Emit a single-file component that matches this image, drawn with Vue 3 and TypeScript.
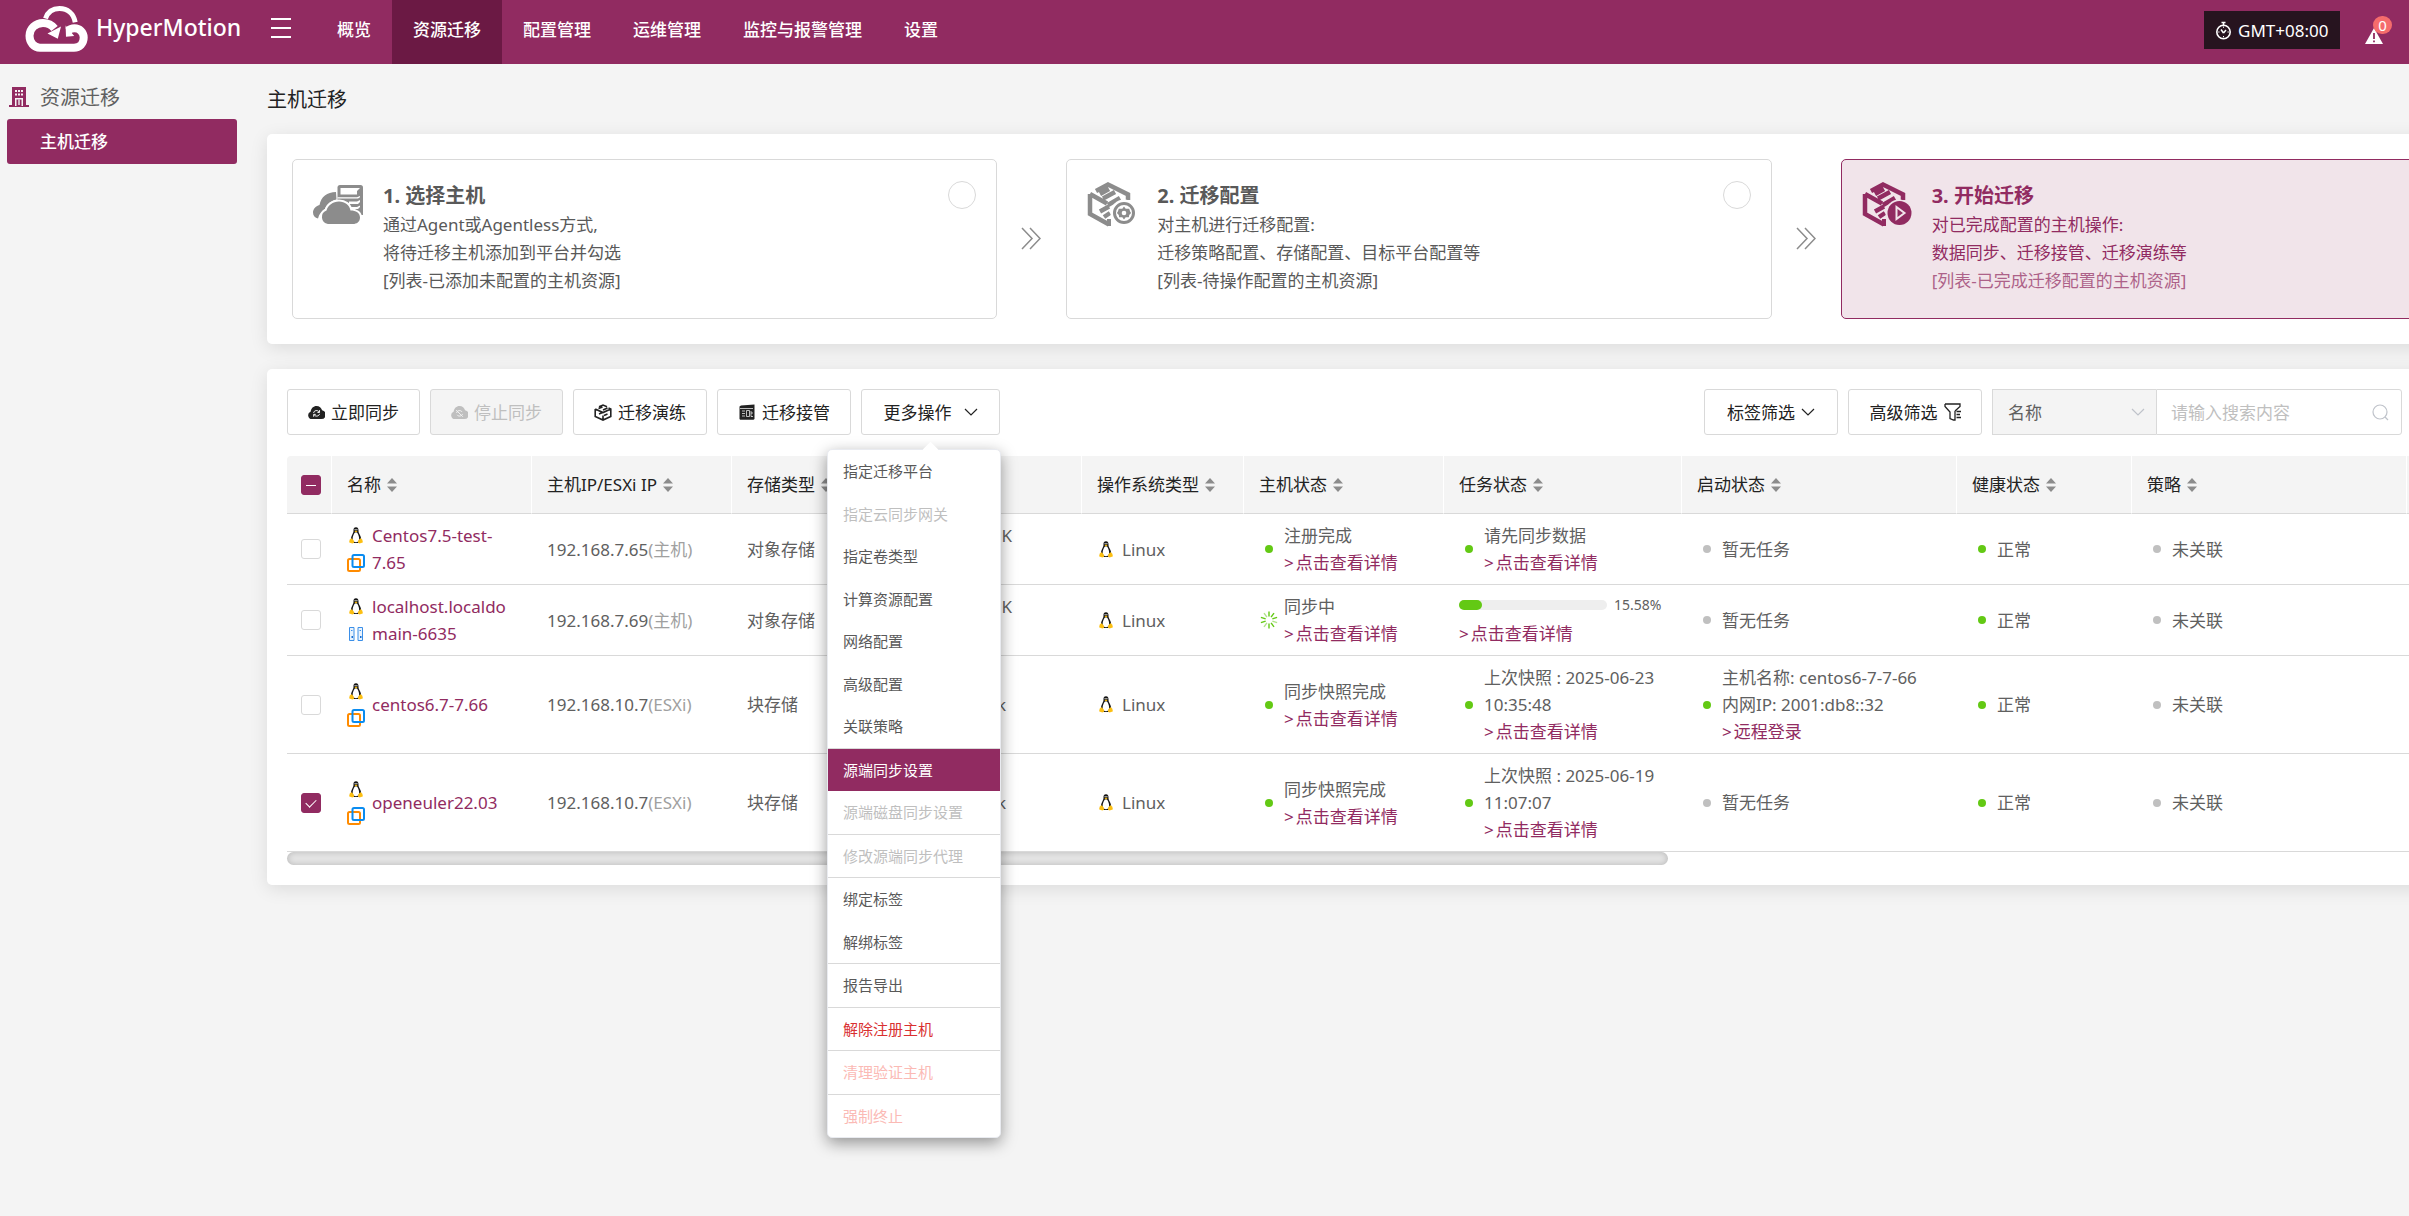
<script setup lang="ts">
import { ref } from 'vue'

type Tone = 'ok' | 'idle' | 'busy'

interface Status {
  tone: Tone
  lines: string[]
  link?: string
}

interface Host {
  id: number
  name: string[]
  source: 'vm' | 'server'
  ip: string
  kind: string
  storage: string
  platform: string
  wrapped: boolean
  host: Status
  task: Status
  progress?: number
  boot: Status
  checked: boolean
}

interface MenuItem {
  label: string
  divided?: boolean
  state?: 'active' | 'disabled' | 'danger' | 'danger-disabled'
}

const detail = '点击查看详情'
const navItems = ['概览', '资源迁移', '配置管理', '运维管理', '监控与报警管理', '设置']
const activeNav = ref('资源迁移')
const keyword = ref('')

const steps = [
  {
    title: '1. 选择主机',
    icon: 'cloud',
    lines: ['通过Agent或Agentless方式,', '将待迁移主机添加到平台并勾选', '[列表-已添加未配置的主机资源]'],
  },
  {
    title: '2. 迁移配置',
    icon: 'gear',
    lines: ['对主机进行迁移配置:', '迁移策略配置、存储配置、目标平台配置等', '[列表-待操作配置的主机资源]'],
  },
  {
    title: '3. 开始迁移',
    icon: 'play',
    lines: ['对已完成配置的主机操作:', '数据同步、迁移接管、迁移演练等', '[列表-已完成迁移配置的主机资源]'],
  },
]

const menu: MenuItem[] = [
  { label: '指定迁移平台' },
  { label: '指定云同步网关', state: 'disabled' },
  { label: '指定卷类型' },
  { label: '计算资源配置' },
  { label: '网络配置' },
  { label: '高级配置' },
  { label: '关联策略' },
  { label: '源端同步设置', divided: true, state: 'active' },
  { label: '源端磁盘同步设置', state: 'disabled' },
  { label: '修改源端同步代理', divided: true, state: 'disabled' },
  { label: '绑定标签', divided: true },
  { label: '解绑标签' },
  { label: '报告导出', divided: true },
  { label: '解除注册主机', divided: true, state: 'danger' },
  { label: '清理验证主机', divided: true, state: 'danger-disabled' },
  { label: '强制终止', divided: true, state: 'danger-disabled' },
]

const columns = ['名称', '主机IP/ESXi IP', '存储类型', '', '操作系统类型', '主机状态', '任务状态', '启动状态', '健康状态', '策略']

const idle: Status = { tone: 'idle', lines: ['暂无任务'] }

const hosts = ref<Host[]>([
  {
    id: 1,
    name: ['Centos7.5-test-', '7.65'],
    source: 'vm',
    ip: '192.168.7.65',
    kind: '(主机)',
    storage: '对象存储',
    platform: 'K',
    wrapped: true,
    host: { tone: 'ok', lines: ['注册完成'], link: detail },
    task: { tone: 'ok', lines: ['请先同步数据'], link: detail },
    boot: idle,
    checked: false,
  },
  {
    id: 2,
    name: ['localhost.localdo', 'main-6635'],
    source: 'server',
    ip: '192.168.7.69',
    kind: '(主机)',
    storage: '对象存储',
    platform: 'K',
    wrapped: true,
    host: { tone: 'busy', lines: ['同步中'], link: detail },
    task: { tone: 'ok', lines: [], link: detail },
    progress: 15.58,
    boot: idle,
    checked: false,
  },
  {
    id: 3,
    name: ['centos6.7-7.66'],
    source: 'vm',
    ip: '192.168.10.7',
    kind: '(ESXi)',
    storage: '块存储',
    platform: 'k',
    wrapped: false,
    host: { tone: 'ok', lines: ['同步快照完成'], link: detail },
    task: { tone: 'ok', lines: ['上次快照 : 2025-06-23', '10:35:48'], link: detail },
    boot: { tone: 'ok', lines: ['主机名称: centos6-7-7-66', '内网IP: 2001:db8::32'], link: '远程登录' },
    checked: false,
  },
  {
    id: 4,
    name: ['openeuler22.03'],
    source: 'vm',
    ip: '192.168.10.7',
    kind: '(ESXi)',
    storage: '块存储',
    platform: 'k',
    wrapped: false,
    host: { tone: 'ok', lines: ['同步快照完成'], link: detail },
    task: { tone: 'ok', lines: ['上次快照 : 2025-06-19', '11:07:07'], link: detail },
    boot: idle,
    checked: true,
  },
])
</script>

<template>
  <div class="page">
    <svg class="defs" aria-hidden="true">
      <symbol id="tux" viewBox="0 0 14 17">
        <path d="M7 .3C4.900.3 4.400 1.900 4.500 3.600c.1 1.900-.6 2.600-1.400 4.300C2.200 9.700 1.700 11.500 2 13.500l3 2.500h4l3.100-2.500c.3-2.200-.4-4.100-1.300-5.800C9.900 6 9.500 5.300 9.500 3.500 9.500 1.600 9 .3 7 .3z" fill="#151515" />
        <path d="M7 5.200c-1 0-1.700.8-2.200 2C4.100 8.800 3.500 10.400 3.700 12.200c.2 1.700 1.500 3 3.300 3s3-1.300 3.100-3c.1-1.800-.4-3.400-1-4.900C8.600 6 8 5.200 7 5.200z" fill="#fff" />
        <path d="M5.500 4.200 7 3.400l1.500.8L7 5.400z" fill="#f5b800" />
        <circle cx="6.100" cy="2.700" r=".6" fill="#fff" />
        <circle cx="7.900" cy="2.700" r=".6" fill="#fff" />
        <path d="M2.300 11.300c.9.2 2.700 2.300 2.800 3.300.1 1.300-1.200 2.100-2.500 1.700L.4 15.500c-.6-.4 0-1 .1-1.700 0-.9.100-1.400.7-1.600.5-.2.600-.9 1.100-.9zM11.700 11.300c-.9.2-2.700 2.300-2.800 3.300-.1 1.300 1.200 2.100 2.500 1.700l2.200-.8c.6-.4 0-1-.1-1.700 0-.9-.1-1.400-.7-1.600-.5-.2-.6-.9-1.100-.9z" fill="#fcbf12" />
      </symbol>
      <symbol id="hex" viewBox="0 0 50 46">
        <path d="M9 10 21 3.500l20 10v5.500M3 13v20l19 10.500M3 13l17 9.500M13 13l9-5M16 17.500 28 11M21 24l12-7M13 30.500l9-5M17 36l6-4" fill="none" stroke="currentColor" stroke-width="4.500" />
        <path d="M22 38v7" stroke="currentColor" stroke-width="4" />
      </symbol>
      <symbol id="chevron" viewBox="0 0 14 9">
        <path d="m1 1 6 6 6-6" fill="none" stroke="currentColor" stroke-width="1.200" />
      </symbol>
    </svg>

    <header class="topbar">
      <a class="brand" href="#">
        <svg class="brand-mark" viewBox="0 0 63 46" aria-hidden="true">
          <path d="M20.500 12.500C23 5.500 28 2.600 34.500 2.600c8 0 14 5 15.700 13.600" fill="none" stroke="#fff" stroke-width="5" />
          <path d="M29.500 22.500C26.500 18.500 22.500 17 18 17 10.500 17 4.500 22.500 4.500 29.800 4.500 36.500 9 41.700 15 41.700h34c5.500 0 9.700-4.200 9.700-10.200 0-5.500-4.300-9.300-9.200-9.300-2.700 0-4.700.9-6.400 2.600" fill="none" stroke="#fff" stroke-width="8" />
          <path d="m22.500 27.500 13.500-7-3.200 12.300zM41 30.700l-.4-11.200 8.600 10.400z" fill="#fff" />
        </svg>
        <span>HyperMotion</span>
      </a>
      <button class="burger" type="button" aria-label="菜单"><i></i><i></i><i></i></button>
      <nav class="nav">
        <a v-for="item in navItems" :key="item" href="#" :class="{ current: item === activeNav }" @click.prevent="activeNav = item">{{ item }}</a>
      </nav>
      <button class="zone" type="button">
        <svg width="17" height="19" viewBox="0 0 17 19" fill="none" stroke="#fff" aria-hidden="true">
          <circle cx="8.500" cy="11" r="6.700" stroke-width="1.600" />
          <path d="M6.500 1.500h4M8.500 1.500v3M8.500 12 6 8.500M8.500 12l2.500-3" stroke-width="1.500" />
          <path d="M8.500 5.500v1.300M8.500 15v1.300M3.200 11h1.300M12.500 11h1.300" />
        </svg>
        <span>GMT+08:00</span>
      </button>
      <button class="alarm" type="button" aria-label="告警">
        <svg width="18" height="16" viewBox="0 0 18 16" aria-hidden="true">
          <path d="M9 0 18 16H0z" fill="#fff" />
          <path d="M9 5v6M9 12.500v1.700" stroke="#912b61" stroke-width="1.800" />
        </svg>
        <span class="badge">0</span>
      </button>
    </header>

    <div class="body">
      <aside class="side">
        <div class="side-title">
          <svg width="20" height="20" viewBox="0 0 20 20" aria-hidden="true">
            <path d="M3 0h14v18h3v2H0v-2h3z" fill="#912b61" />
            <path d="M6 3h2v2H6zM9 3h2v2H9zM12 3h2v2h-2zM6 6.500h2v2H6zM9 6.500h2v2H9zM12 6.500h2v2h-2zM6 11h8v8h-1.500v-6.500h-5V19H6z" fill="#f4f4f4" />
            <path d="M9.300 12.500h1.400V18H9.300z" fill="#f4f4f4" />
          </svg>
          <span>资源迁移</span>
        </div>
        <a class="side-link" href="#">主机迁移</a>
      </aside>

      <main class="content">
        <h1>主机迁移</h1>

        <section class="card steps">
          <template v-for="(step, i) in steps" :key="step.title">
            <svg v-if="i" class="next" viewBox="0 0 20 23" aria-hidden="true">
              <path d="m1 1 10 10.500L1 22M9 1l10 10.500L9 22" fill="none" stroke="#8c8c8c" stroke-width="1.500" />
            </svg>
            <article class="step" :class="{ chosen: i === 2 }">
              <svg v-if="step.icon === 'cloud'" class="step-icon" viewBox="0 -4 50 46" aria-hidden="true">
                <path d="M27 0h20.500A2.500 2.500 0 0 1 50 2.500V30H24.500V2.500A2.500 2.500 0 0 1 27 0z" fill="currentColor" />
                <path d="M27.500 3H47l-3 3v3.500H27.500zM24.500 12.300H44l3-1.300v1.300l-2 1.200H24.500zM36 16.500h8l3-1.500v2l-2 2h-9zM37 22h7l3-1.500V22l-2 2h-8z" fill="#fff" />
                <path d="M23 7C14 7 8 12 6.500 20 2.500 21 0 24.500 0 27.500c0 3 2 5.500 5 6 1-4.500 4-8 7-9.500 2-5 6-8.500 11.500-9.500z" fill="currentColor" />
                <path d="M15 39a7 7 0 0 1-1.500-13.500C14.500 20.500 20 16.500 26 16.500s10.500 3.500 11.500 9C43 25.500 47 28 47 32.500S43.500 39 40 39z" fill="currentColor" stroke="#fff" stroke-width="4" paint-order="stroke" />
              </svg>
              <svg v-else class="step-icon" viewBox="0 0 50 46" aria-hidden="true">
                <use href="#hex" />
                <circle cx="37" cy="32" r="13.500" class="halo" />
                <template v-if="step.icon === 'gear'">
                  <circle cx="37" cy="32" r="9.500" fill="none" stroke="currentColor" stroke-width="3" />
                  <path d="m37 25.500 1.700 2.200h3.500l.9 2.800 1 1.500-1.900 2-.3 2.300h-3.200L37 38.500l-1.700-2.200h-3.200l-.3-2.300-1.900-2 1-1.500.9-2.800h3.500z" fill="currentColor" />
                  <circle cx="37" cy="32" r="2.300" fill="#fff" />
                </template>
                <template v-else>
                  <circle cx="37.500" cy="32" r="12" fill="currentColor" />
                  <path d="M34.500 26v12l8-6z" fill="none" stroke="#f1e4ea" stroke-width="2" />
                </template>
              </svg>
              <div class="step-text">
                <h2>{{ step.title }}</h2>
                <p v-for="line in step.lines" :key="line">{{ line }}</p>
              </div>
              <span v-if="i < 2" class="ring"></span>
            </article>
          </template>
        </section>

        <section class="card list">
          <div class="toolbar">
            <button type="button" class="btn">
              <svg width="17" height="15" viewBox="0 0 18 15" aria-hidden="true">
                <path d="M4 14.500a4 4 0 0 1-1.300-7.700C3.200 2.900 5.800.5 9 .5c3 0 5.300 1.900 5.900 4.700a4.700 4.700 0 0 1-.9 9.300z" fill="currentColor" />
                <path d="M6 8c.2-3 4.500-3.400 5.700-1M12.200 5v2.500H10M12.200 9c-.5 2.700-4.500 3-5.700 1M6 12V9.500h2.200" fill="none" stroke="#fff" />
              </svg>立即同步
            </button>
            <button type="button" class="btn off" disabled>
              <svg width="17" height="15" viewBox="0 0 18 15" aria-hidden="true">
                <path d="M4 14.500a4 4 0 0 1-1.300-7.700C3.200 2.900 5.800.5 9 .5c3 0 5.300 1.900 5.900 4.700a4.700 4.700 0 0 1-.9 9.300z" fill="currentColor" />
                <path d="M6 8c.2-3 4.500-3.400 5.700-1M12.200 9c-.5 2.700-4.500 3-5.700 1M5.500 5l7 7" fill="none" stroke="#f4f4f4" />
              </svg>停止同步
            </button>
            <button type="button" class="btn">
              <svg width="18" height="17" viewBox="0 0 18 17" fill="none" stroke="currentColor" stroke-width="1.600" aria-hidden="true">
                <path d="M5 2.700 9 1l4 1.700M1.200 5v7.500L9 16l7.800-3.500V5l-2.300-1M1.200 5 9 8.500 16.800 5M9 11.500V16M4.500 4.500l4-1.500M9 6l4.500-2M5 10l3.500-1.500M10 11.500l3.500-1.500" />
              </svg>迁移演练
            </button>
            <button type="button" class="btn">
              <svg width="18" height="16" viewBox="0 0 16 16" aria-hidden="true">
                <path d="M2 1.500 15.500.5V15l-1 .8H1.200L.5 15V2.500z" fill="currentColor" />
                <path d="M1 4.500h13M3 7h3M3 9.500h3M3 12h3M7.500 6.500v6h3v-6zM12 7v5.500h2M12 9h2" fill="none" stroke="#fff" stroke-width=".7" />
              </svg>迁移接管
            </button>
            <div class="more">
              <button type="button" class="btn wide" aria-haspopup="menu" aria-expanded="true">更多操作<svg width="14" height="9"><use href="#chevron" /></svg></button>
              <ul class="menu" role="menu">
                <li v-for="item in menu" :key="item.label" :class="{ divided: item.divided }" role="none">
                  <button type="button" role="menuitem" :class="item.state" :disabled="item.state === 'disabled' || item.state === 'danger-disabled'">{{ item.label }}</button>
                </li>
              </ul>
            </div>

            <div class="filters">
              <button type="button" class="btn filter">标签筛选<svg width="14" height="9"><use href="#chevron" /></svg></button>
              <button type="button" class="btn filter">高级筛选<svg width="17" height="18" viewBox="0 0 17 18" fill="none" stroke="currentColor" stroke-width="1.300" aria-hidden="true">
                <path d="M1 1h15v2.500L11 8M1 1v2.500L6 9v6.500L9.500 17H11V8M12.500 8.500H17M12.500 11.500H16M12.500 14.500H17" />
              </svg></button>
              <div class="search">
                <div class="picker">
                  <select aria-label="搜索字段"><option>名称</option></select>
                  <svg width="14" height="9"><use href="#chevron" /></svg>
                </div>
                <div class="field">
                  <input v-model="keyword" type="text" aria-label="搜索内容" placeholder="请输入搜索内容" />
                  <svg width="17" height="17" viewBox="0 0 17 17" fill="none" stroke="#bfc3ca" stroke-width="1.200" aria-hidden="true">
                    <circle cx="8" cy="8" r="7" />
                    <path d="m13 13 3 3" />
                  </svg>
                </div>
              </div>
            </div>
          </div>

          <table>
            <colgroup>
              <col class="w-check" /><col class="w-200" /><col class="w-200" /><col class="w-150" /><col class="w-200" /><col class="w-os" />
              <col class="w-200" /><col class="w-task" /><col class="w-275" /><col class="w-health" /><col class="w-275" /><col />
            </colgroup>
            <thead>
              <tr>
                <th class="pick"><input class="box partial" type="checkbox" aria-label="全选" /></th>
                <th v-for="(col, i) in columns" :key="i">
                  {{ col }}<svg v-if="col" class="sort" viewBox="0 0 10 14" aria-hidden="true"><path d="M5 0l5 5.500H0zM5 14l5-5.500H0z" fill="#8c8c8c" /></svg>
                </th>
                <th></th>
              </tr>
            </thead>
            <tbody>
              <tr v-for="row in hosts" :key="row.id">
                <td class="pick"><input v-model="row.checked" class="box" type="checkbox" :aria-label="row.name.join('')" /></td>
                <td>
                  <div class="name">
                    <span class="marks">
                      <svg width="14" height="17"><use href="#tux" /></svg>
                      <svg v-if="row.source === 'vm'" width="18" height="18" viewBox="0 0 18 18" fill="none" stroke-width="2" aria-hidden="true">
                        <rect x="1" y="5" width="12" height="12" rx="1.500" stroke="#ff8b00" />
                        <rect x="5.500" y="1" width="11.500" height="12" rx="1.500" stroke="#0a8cf0" />
                      </svg>
                      <svg v-else width="14" height="14" viewBox="0 0 14 14" aria-hidden="true">
                        <path d="M.5.5h4.500v13H.5zM9 .5h4.500v13H9z" fill="#e9f3fd" stroke="#3b8fe8" />
                        <path d="M2 3.500h1.500M10.500 3.500H12" stroke="#3b8fe8" />
                        <path d="M2.500 10h1.500M11 10h1.500" stroke="#1b6fd0" stroke-width="2" />
                      </svg>
                    </span>
                    <a href="#"><template v-for="(part, i) in row.name" :key="part"><br v-if="i" />{{ part }}</template></a>
                  </div>
                </td>
                <td>{{ row.ip }}<span class="dim">{{ row.kind }}</span></td>
                <td>{{ row.storage }}</td>
                <td class="platform" :class="{ wrapped: row.wrapped }">{{ row.platform }}</td>
                <td><div class="os"><svg width="14" height="17"><use href="#tux" /></svg>Linux</div></td>
                <td v-for="(state, i) in [row.host, row.task, row.boot]" :key="i">
                  <div v-if="i === 1 && row.progress" class="progress">
                    <div class="meter">
                      <div class="track"><div class="fill" :style="{ width: row.progress + '%' }"></div></div>
                      <span>{{ row.progress }}%</span>
                    </div>
                    <a class="go" href="#"><span>&gt;</span>{{ state.link }}</a>
                  </div>
                  <div v-else class="status">
                    <span class="lamp">
                      <svg v-if="state.tone === 'busy'" width="18" height="18" viewBox="-9 -9 18 18" stroke="#63c914" stroke-width="1.400" aria-hidden="true">
                        <path v-for="n in 10" :key="n" d="M0-3.500v-5" :opacity="n % 3 ? 1 : 0.5" :transform="`rotate(${n * 36})`" />
                      </svg>
                      <i v-else :class="state.tone"></i>
                    </span>
                    <div>
                      <div v-for="line in state.lines" :key="line">{{ line }}</div>
                      <a v-if="state.link" class="go" href="#"><span>&gt;</span>{{ state.link }}</a>
                    </div>
                  </div>
                </td>
                <td><div class="status"><span class="lamp"><i class="ok"></i></span>正常</div></td>
                <td><div class="status"><span class="lamp"><i class="idle"></i></span>未关联</div></td>
                <td></td>
              </tr>
            </tbody>
          </table>
          <div class="scroll"></div>
        </section>
      </main>
    </div>
  </div>
</template>

<style>
body {
  margin: 0;
  background: #f4f4f4;
}
</style>

<style scoped>
.page {
  min-height: 100vh;
  overflow: hidden;
  background: #f4f4f4;
  color: #606060;
  font: 17px/27px "Noto Sans", "Noto Sans CJK SC", sans-serif;
}
.page * {
  box-sizing: border-box;
}
.defs {
  position: absolute;
  width: 0;
  height: 0;
}
a {
  color: #912b61;
  text-decoration: none;
}
button,
input,
select {
  font: inherit;
}
button {
  cursor: pointer;
}

.topbar {
  display: flex;
  align-items: center;
  height: 64px;
  padding: 0 17px 0 25px;
  background: #912b61;
}
.brand {
  display: flex;
  align-items: center;
  gap: 8px;
  width: 246px;
  height: 58px;
  align-self: flex-start;
  color: #fff;
  font-size: 23px;
  font-weight: 500;
}
.brand span {
  margin-bottom: 4px;
}
.brand-mark {
  width: 63px;
  height: 46px;
}
.burger {
  display: flex;
  flex-direction: column;
  gap: 7px;
  width: 20px;
  margin: 0 25px 8px 0;
  padding: 0;
  border: 0;
  background: none;
}
.burger i {
  height: 2px;
  background: #fff;
}
.nav {
  display: flex;
  flex: 1;
  height: 64px;
}
.nav a {
  padding: 0 21px 4px;
  color: #fff;
  font-weight: 500;
  line-height: 60px;
}
.nav .current {
  background: #6b1944;
}
.zone {
  display: flex;
  align-items: center;
  gap: 6px;
  width: 136px;
  height: 38px;
  margin: 0 25px 4px 0;
  padding: 0 11px;
  border: 0;
  background: #27141f;
  color: #fff;
}
.alarm {
  position: relative;
  display: flex;
  align-items: flex-end;
  width: 27px;
  height: 28px;
  margin-bottom: 4px;
  padding: 0;
  border: 0;
  background: none;
}
.badge {
  position: absolute;
  top: 0;
  right: 0;
  width: 19px;
  height: 18px;
  border-radius: 9px;
  background: #f56c6c;
  color: #fff;
  font-size: 15px;
  line-height: 18px;
}

.body {
  display: flex;
}
.side {
  flex: 0 0 267px;
  padding: 15px 30px 0 7px;
}
.side-title {
  display: flex;
  align-items: center;
  gap: 11px;
  height: 36px;
  margin-bottom: 4px;
  padding-left: 2px;
  font-size: 20px;
}
.side-link {
  display: block;
  padding-left: 33px;
  border-radius: 3px;
  background: #912b61;
  color: #fff;
  font-weight: 500;
  line-height: 45px;
}
.content {
  flex: 1;
  min-width: 0;
}
h1 {
  margin: 0;
  padding-top: 2px;
  color: #222;
  font-size: 20px;
  font-weight: 400;
  line-height: 68px;
}
.card {
  margin: 0 -162px 25px 0;
  border-radius: 5px;
  background: #fff;
  box-shadow: 0 4px 18px rgba(0, 0, 0, 0.1);
}
.steps {
  display: flex;
  align-items: center;
  padding: 25px;
}
.next {
  flex: none;
  width: 20px;
  height: 23px;
  margin: 0 25px 2px 24px;
}
.step {
  display: flex;
  flex: 1;
  align-items: flex-start;
  gap: 20px;
  height: 160px;
  padding: 21px 20px;
  border: 1px solid #d9d9d9;
  border-radius: 5px;
  color: #8c8c8c;
}
.step-icon {
  flex: none;
  width: 50px;
  height: 46px;
}
.halo {
  fill: #fff;
}
.step-text {
  flex: 1;
  color: #595959;
}
h2 {
  margin: 0;
  font-size: 20px;
  font-weight: 700;
  line-height: 30px;
}
.step p {
  margin: 0;
  line-height: 28px;
}
.ring {
  width: 28px;
  height: 28px;
  border: 1px solid #d9d9d9;
  border-radius: 50%;
}
.chosen {
  border-color: #912b61;
  background: #f1e4ea;
  color: #912b61;
}
.chosen .halo {
  fill: #f1e4ea;
}
.chosen .step-text {
  color: #912b61;
}
.chosen p:last-child {
  opacity: 0.7;
}

.list {
  padding: 20px;
}
.toolbar {
  display: flex;
  gap: 10px;
  margin: 0 149px 21px 0;
}
.btn {
  display: flex;
  align-items: center;
  justify-content: center;
  gap: 6px;
  height: 46px;
  padding: 0 20px;
  border: 1px solid #d9d9d9;
  border-radius: 3px;
  background: #fff;
  color: #222;
  white-space: nowrap;
}
.btn.off {
  background: #f4f4f4;
  color: #bfbfbf;
}
.btn.wide {
  gap: 12px;
  width: 139px;
}
.btn.filter {
  width: 134px;
}
.more {
  position: relative;
}
.menu {
  position: absolute;
  z-index: 2;
  top: 60px;
  right: -1px;
  width: 174px;
  margin: 0;
  padding: 0;
  border: 1px solid #e9ebf0;
  border-radius: 5px;
  background: #fff;
  box-shadow: 0 5px 16px rgba(0, 0, 0, 0.4);
  font-size: 15px;
  line-height: 1.5;
  list-style: none;
}
.menu::before {
  content: "";
  position: absolute;
  top: -6px;
  left: 97px;
  width: 11px;
  height: 11px;
  background: #fff;
  transform: rotate(45deg);
}
.menu li {
  position: relative;
}
.divided {
  border-top: 1px solid #d9d9d9;
}
.menu button {
  display: block;
  width: 100%;
  padding: 10px 15px;
  border: 0;
  background: none;
  color: #595959;
  text-align: left;
}
.menu .active {
  background: #912b61;
  color: #fff;
}
.menu .disabled {
  color: #bfbfbf;
}
.menu .danger {
  color: #d93030;
}
.menu .danger-disabled {
  color: #fbbab5;
}
.filters {
  display: flex;
  gap: 10px;
  margin-left: auto;
}
.search {
  display: flex;
}
.picker,
.field {
  position: relative;
}
.picker svg {
  position: absolute;
  top: 19px;
  right: 11px;
  color: #bfc3ca;
}
.field svg {
  position: absolute;
  top: 15px;
  right: 13px;
}
.search select,
.search input {
  height: 46px;
  border: 1px solid #d9d9d9;
  outline: 0;
}
.search select {
  width: 164px;
  padding: 0 15px;
  border-right: 0;
  border-radius: 0;
  background: #f4f4f4;
  color: #606060;
  appearance: none;
}
.search input {
  width: 246px;
  padding: 0 40px 0 14px;
  border-radius: 0 3px 3px 0;
  background: #fff;
}
.search input::placeholder {
  color: #bfbfbf;
}

table {
  width: 100%;
  border-collapse: separate;
  border-spacing: 0;
  table-layout: fixed;
}
.w-check { width: 45px; }
.w-150 { width: 150px; }
.w-os { width: 162px; }
.w-health { width: 175px; }
.w-200 { width: 200px; }
.w-task { width: 238px; }
.w-275 { width: 275px; }
th,
td {
  border-bottom: 1px solid #d9d9d9;
  text-align: left;
}
th {
  height: 58px;
  padding: 0 15px;
  border-right: 1px solid #fff;
  background: #f4f4f4;
  color: #222;
  font-weight: 400;
  white-space: nowrap;
}
th:first-child {
  border-top-left-radius: 4px;
}
td {
  padding: 8px 15px;
}
th.pick,
td.pick {
  padding: 0 0 0 14px;
}
.sort {
  width: 10px;
  height: 14px;
  margin-left: 6px;
  vertical-align: -1px;
}
.box {
  display: block;
  position: relative;
  width: 20px;
  height: 20px;
  margin: 0;
  border: 1px solid #d9d9d9;
  border-radius: 3px;
  background: #fff;
  appearance: none;
}
.box:checked,
.box.partial {
  border-color: #912b61;
  background: #912b61;
}
.box:checked::after {
  content: "";
  position: absolute;
  top: 3px;
  left: 6px;
  width: 5px;
  height: 9px;
  border: solid #fff;
  border-width: 0 1px 1px 0;
  transform: rotate(45deg);
}
.box.partial::after {
  content: "";
  position: absolute;
  top: 9px;
  left: 4px;
  width: 10px;
  height: 1px;
  background: #fff;
}
.name {
  display: flex;
  align-items: center;
  gap: 7px;
  white-space: nowrap;
}
.marks {
  display: grid;
  grid-template-rows: 27px 27px;
  place-items: center;
  width: 18px;
}
.dim {
  color: #a0a0a0;
}
.platform {
  padding-right: 76px;
  text-align: right;
}
.platform.wrapped {
  padding-right: 70px;
  vertical-align: top;
}
.os {
  display: flex;
  align-items: center;
  gap: 9px;
  padding-left: 2px;
}
.go span {
  margin-right: 2px;
}
.status {
  display: flex;
  align-items: center;
  gap: 5px;
  white-space: nowrap;
}
.lamp {
  display: flex;
  justify-content: center;
  width: 20px;
}
.lamp i {
  width: 8px;
  height: 8px;
  border-radius: 50%;
}
.lamp .ok {
  background: #63c914;
}
.lamp .idle {
  background: #c0c0c0;
}
.meter {
  display: flex;
  align-items: center;
  gap: 7px;
  margin-bottom: 3px;
  font-size: 14px;
  line-height: 24px;
}
.track {
  width: 148px;
  height: 10px;
  border-radius: 5px;
  background: #eee;
}
.fill {
  height: 100%;
  border-radius: 5px;
  background: #63c914;
}
.scroll {
  width: 61%;
  height: 13px;
  border-radius: 7px;
  background: #e4e4e4;
  box-shadow: inset 0 0 6px rgba(0, 0, 0, 0.2);
}
</style>
